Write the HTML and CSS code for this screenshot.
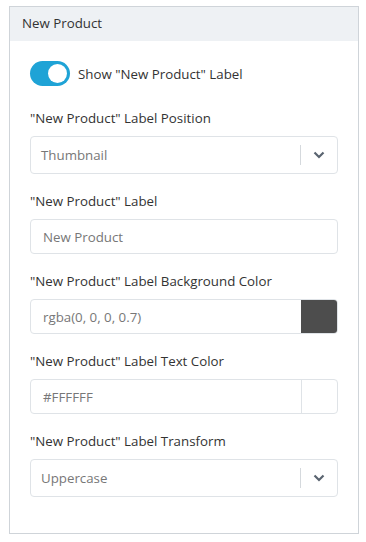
FILE: index.html
```html
<!DOCTYPE html>
<html lang="en">
<head>
  <meta charset="UTF-8" />
  <meta name="viewport" content="width=device-width, initial-scale=1.0"/>
  <title>New Product Settings</title>
  <link rel="stylesheet" href="styles.css">
</head>
<body>
  <div class="panel">
    <div class="panel-header">New Product</div>
    <div class="panel-body">
      <label class="switch-row">
        <span class="switch"><span class="knob"></span></span>
        <span class="switch-text">Show "New Product" Label</span>
      </label>

      <div class="form-group">
        <label class="field-label">"New Product" Label Position</label>
        <div class="select">
          <span class="select-value">Thumbnail</span>
          <span class="select-arrow">
            <svg width="12" height="8" viewBox="0 0 12 8"><path d="M1.5 1.5 L6 6 L10.5 1.5" fill="none" stroke="#5a6470" stroke-width="2.2"/></svg>
          </span>
        </div>
      </div>

      <div class="form-group">
        <label class="field-label">"New Product" Label</label>
        <div class="input">New Product</div>
      </div>

      <div class="form-group">
        <label class="field-label">"New Product" Label Background Color</label>
        <div class="input color-input">
          <span class="color-value">rgba(0, 0, 0, 0.7)</span>
          <span class="swatch swatch-dark"></span>
        </div>
      </div>

      <div class="form-group">
        <label class="field-label">"New Product" Label Text Color</label>
        <div class="input color-input">
          <span class="color-value">#FFFFFF</span>
          <span class="swatch"></span>
        </div>
      </div>

      <div class="form-group">
        <label class="field-label">"New Product" Label Transform</label>
        <div class="select">
          <span class="select-value">Uppercase</span>
          <span class="select-arrow">
            <svg width="12" height="8" viewBox="0 0 12 8"><path d="M1.5 1.5 L6 6 L10.5 1.5" fill="none" stroke="#5a6470" stroke-width="2.2"/></svg>
          </span>
        </div>
      </div>
    </div>
  </div>
</body>
</html>
```

FILE: styles.css
```css
* {
  box-sizing: border-box;
  margin: 0;
  padding: 0;
  font-family: 'Open Sans', 'Noto Sans', sans-serif;
}

body {
  background: #ffffff;
  padding: 6px 7px 0 9px;
  font-size: 13.3px;
  color: #333;
}

.panel {
  width: 350px;
  border: 1px solid #cfd4d9;
}

.panel-header {
  background: #eef1f4;
  height: 34px;
  line-height: 33px;
  padding-left: 12px;
  color: #333;
}

.panel-body {
  padding: 20px 20px 36px;
}

.switch-row {
  display: flex;
  align-items: center;
  gap: 8px;
  margin-bottom: 22px;
}

.switch {
  width: 40px;
  height: 25px;
  border-radius: 13px;
  background: #1fa3d6;
  display: flex;
  align-items: center;
  justify-content: flex-end;
  padding-right: 3px;
}

.knob {
  width: 19px;
  height: 19px;
  border-radius: 50%;
  background: #fff;
}

.switch-text {
  color: #333;
}

.form-group {
  margin-bottom: 17px;
}

.form-group:last-child {
  margin-bottom: 0;
}

.field-label {
  display: block;
  line-height: 20px;
  margin-bottom: 8px;
  color: #333;
}

.select,
.input {
  display: flex;
  align-items: center;
  border: 1px solid #dfe3e7;
  border-radius: 4px;
  color: #777;
  background: #fff;
}

.select {
  height: 38px;
  padding-left: 10px;
}

.select-value {
  flex: 1;
}

.select-arrow {
  display: flex;
  align-items: center;
  justify-content: center;
  width: 37px;
  height: 20px;
  border-left: 1px solid #d5d9dd;
}

.input {
  height: 35px;
  padding-left: 12px;
}

.color-input {
  padding-right: 0;
  overflow: hidden;
}

.color-value {
  flex: 1;
}

.swatch {
  width: 36px;
  height: 100%;
  border-left: 1px solid #dfe3e7;
}

.swatch-dark {
  background: #4d4d4d;
  border-left-color: #4d4d4d;
}
```
